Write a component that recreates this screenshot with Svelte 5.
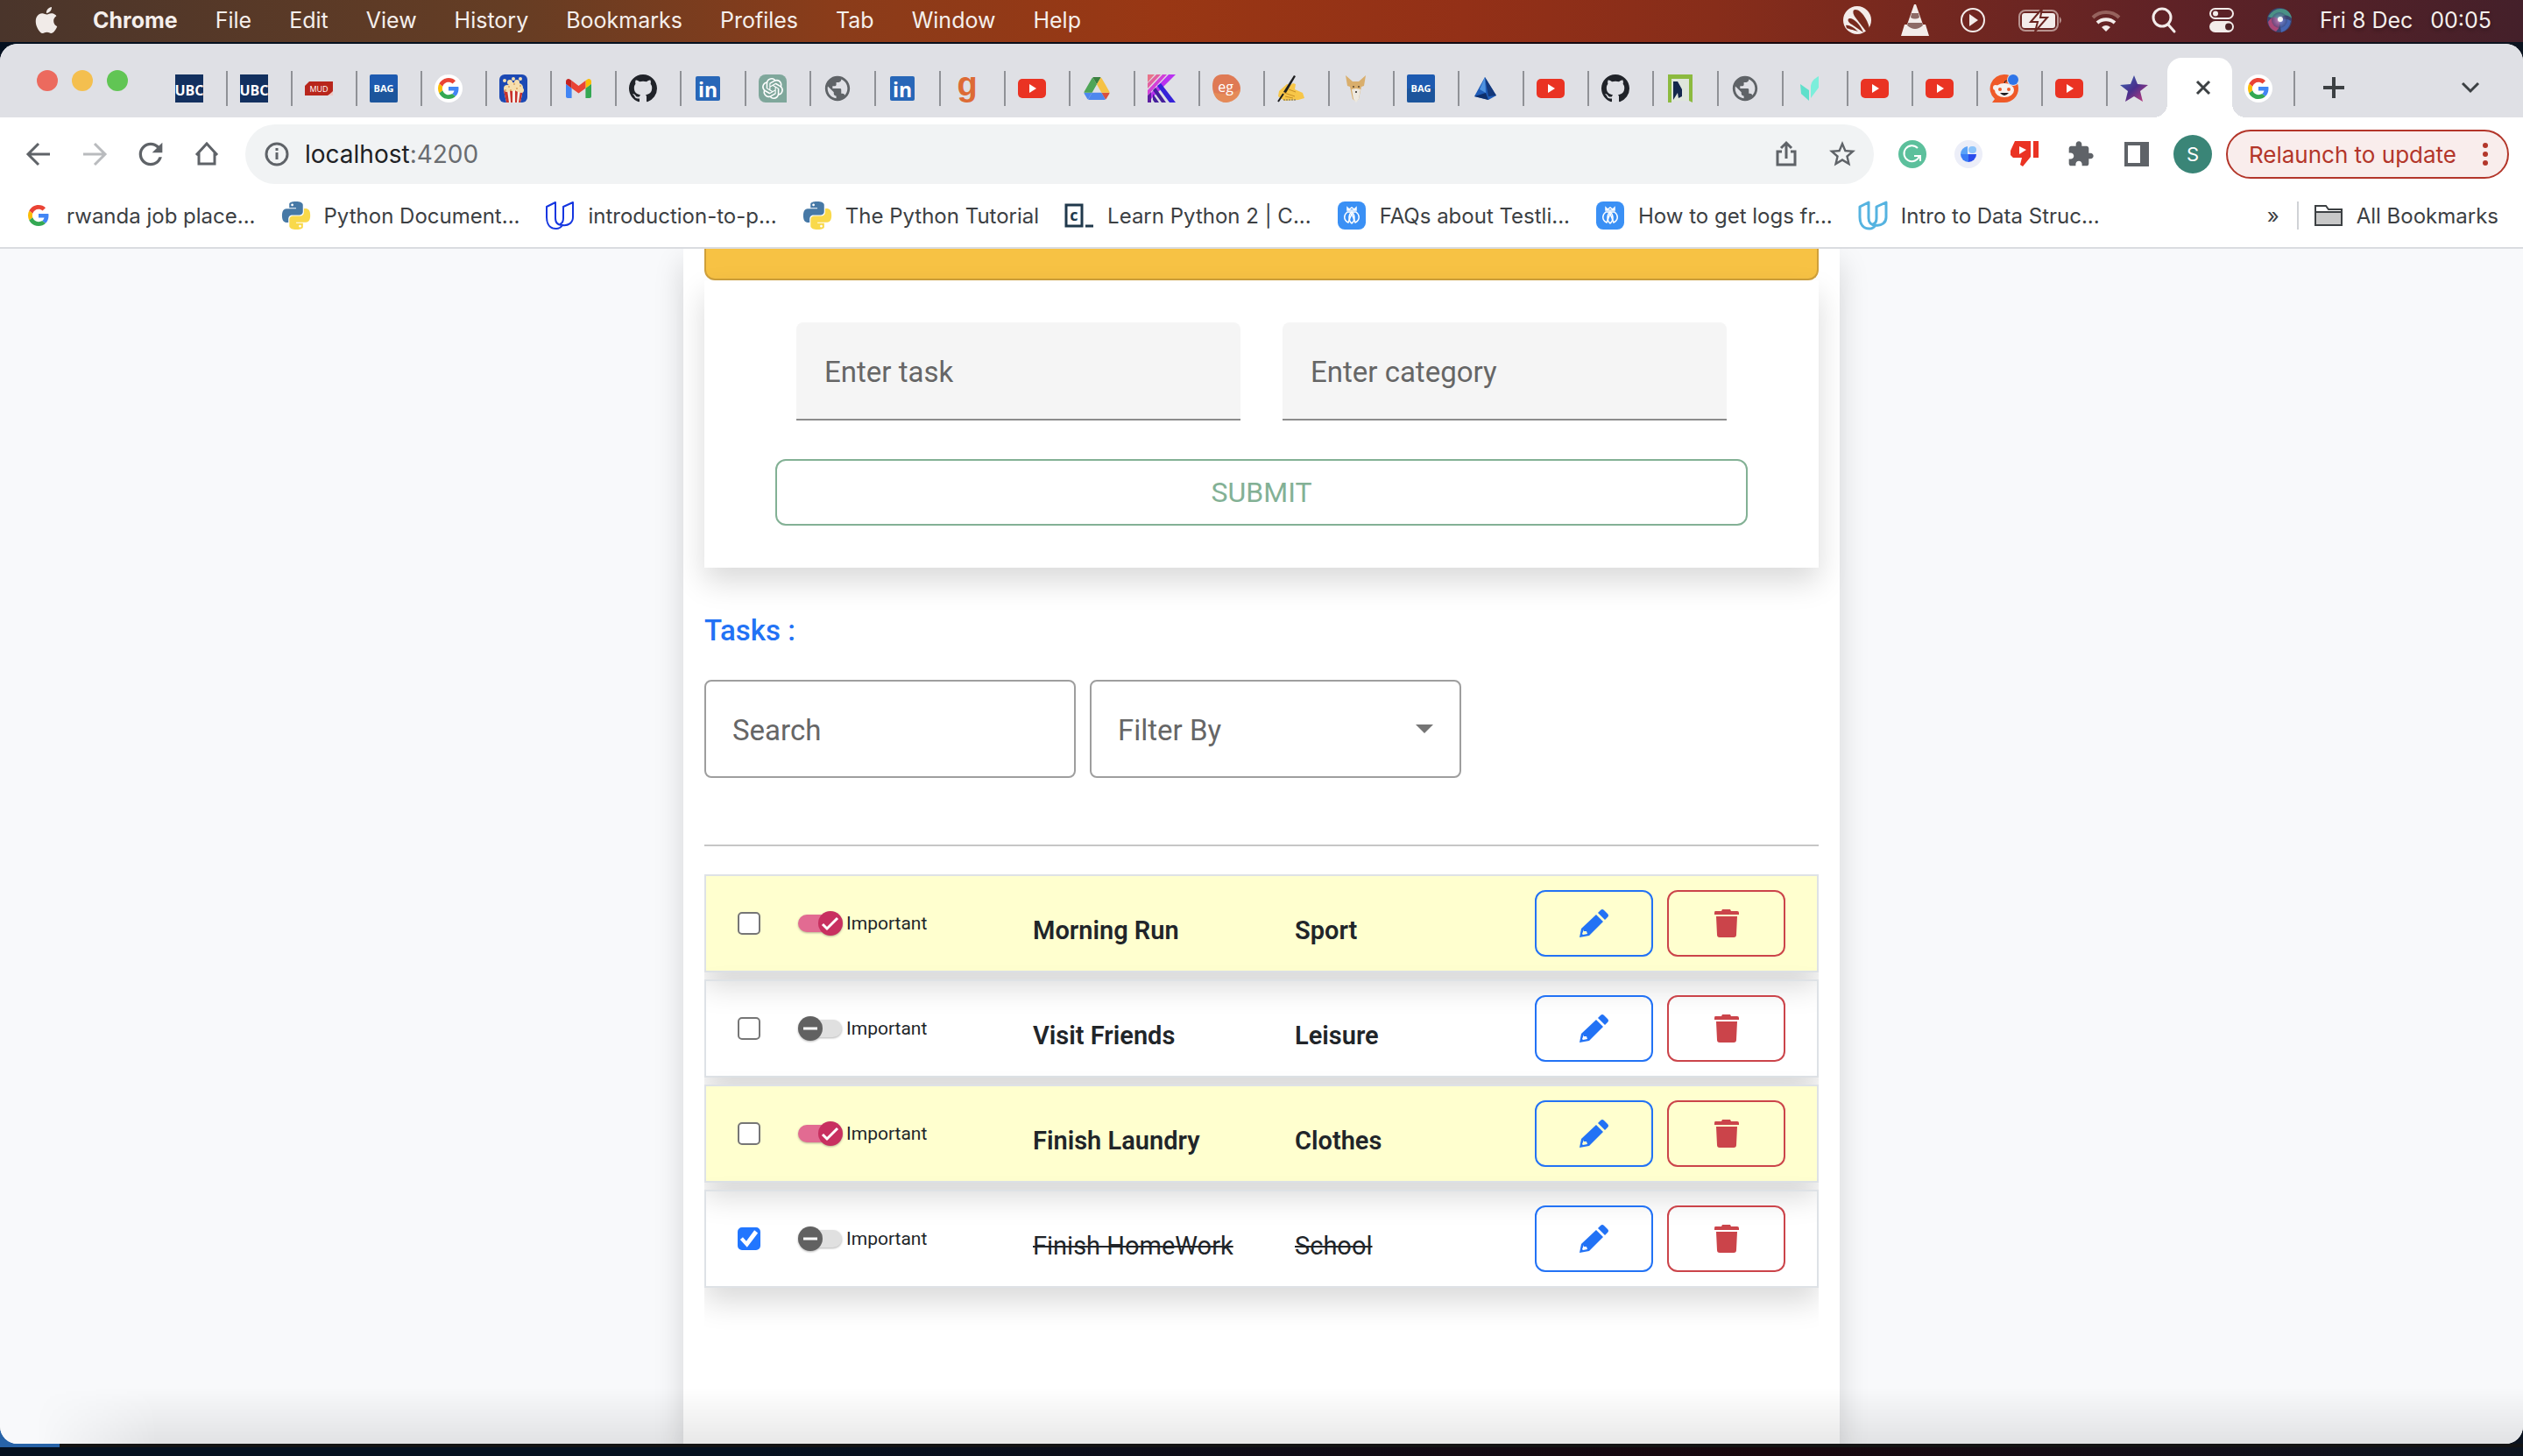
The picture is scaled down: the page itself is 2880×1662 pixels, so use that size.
<script>
  const menus = ['File', 'Edit', 'View', 'History', 'Bookmarks', 'Profiles', 'Tab', 'Window', 'Help'];

  const status = ['swirl', 'cone', 'playing', 'battery', 'wifi', 'search', 'control', 'siri'];

  const tabs = [
    'ubc', 'ubc', 'mud', 'bag', 'googleDisc', 'popcorn', 'gmail', 'github', 'linkedin', 'gpt', 'globe',
    'linkedin', 'goodreads', 'youtube', 'drive', 'kotlin', 'eg', 'writing', 'deer', 'bag', 'prism',
    'youtube', 'github', 'ngx', 'globe', 'leaf', 'youtube', 'youtube', 'reddit', 'youtube', 'star'
  ];

  const bookmarks = [
    ['google', 'rwanda job place...'],
    ['python', 'Python Document...'],
    ['udacity', 'introduction-to-p...'],
    ['python', 'The Python Tutorial'],
    ['codecademy', 'Learn Python 2 | C...'],
    ['testlio', 'FAQs about Testli...'],
    ['testlio', 'How to get logs fr...'],
    ['udacityLight', 'Intro to Data Struc...']
  ];

  let tasks = $state([
    { name: 'Morning Run', category: 'Sport', important: true, done: false },
    { name: 'Visit Friends', category: 'Leisure', important: false, done: false },
    { name: 'Finish Laundry', category: 'Clothes', important: true, done: false },
    { name: 'Finish HomeWork', category: 'School', important: false, done: true }
  ]);

  const githubPath =
    'M8 0C3.58 0 0 3.58 0 8c0 3.54 2.29 6.53 5.47 7.59.4.07.55-.17.55-.38 0-.19-.01-.82-.01-1.49-2.01.37-2.53-.49-2.69-.94-.09-.23-.48-.94-.82-1.13-.28-.15-.68-.52-.01-.53.63-.01 1.08.58 1.23.82.72 1.21 1.87.87 2.33.66.07-.52.28-.87.51-1.07-1.78-.2-3.64-.89-3.64-3.95 0-.87.31-1.59.82-2.15-.08-.2-.36-1.02.08-2.12 0 0 .67-.21 2.2.82.64-.18 1.32-.27 2-.27s1.36.09 2 .27c1.53-1.04 2.2-.82 2.2-.82.44 1.1.16 1.92.08 2.12.51.56.82 1.27.82 2.15 0 3.07-1.87 3.75-3.65 3.95.29.25.54.73.54 1.48 0 1.07-.01 1.93-.01 2.2 0 .21.15.46.55.38A8.01 8.01 0 0 0 16 8c0-4.42-3.58-8-8-8z';

  const googlePaths = [
    ['#ea4335', 'M24 9.5c3.54 0 6.71 1.22 9.21 3.6l6.85-6.85C35.9 2.38 30.47 0 24 0 14.62 0 6.51 5.38 2.56 13.22l7.98 6.19C12.43 13.72 17.74 9.5 24 9.5z'],
    ['#4285f4', 'M46.98 24.55c0-1.57-.15-3.09-.38-4.55H24v9.02h12.94c-.58 2.96-2.26 5.48-4.78 7.18l7.73 6c4.51-4.18 7.09-10.36 7.09-17.65z'],
    ['#fbbc05', 'M10.53 28.59c-.48-1.45-.76-2.99-.76-4.59s.27-3.14.76-4.59l-7.98-6.19C.92 16.46 0 20.12 0 24c0 3.88.92 7.54 2.56 10.78l7.97-6.19z'],
    ['#34a853', 'M24 48c6.48 0 11.93-2.13 15.89-5.81l-7.73-6c-2.15 1.45-4.92 2.3-8.16 2.3-6.26 0-11.57-4.22-13.47-9.91l-7.98 6.19C6.51 42.62 14.62 48 24 48z']
  ];

  const gmailPaths = [
    ['#4285f4', 'M58 108h14V74L52 59v43c0 3.32 2.69 6 6 6'],
    ['#34a853', 'M120 108h14c3.32 0 6-2.69 6-6V59l-20 15'],
    ['#fbbc04', 'M120 48v26l20-15v-8c0-7.42-8.47-11.65-14.4-7.2'],
    ['#ea4335', 'M72 74V48l24 18 24-18v26L96 92'],
    ['#c5221f', 'M52 51v8l20 15V48l-5.6-4.2c-5.94-4.45-14.4-.22-14.4 7.2']
  ];

  const drivePaths = [
    ['#4e87ee', 'm6.6 66.85 3.85 6.65c.8 1.4 1.95 2.5 3.3 3.3l13.75-23.8h-27.5c0 1.55.4 3.1 1.2 4.5z'],
    ['#4fa557', 'm43.65 25-13.75-23.8c-1.35.8-2.5 1.9-3.3 3.3l-25.4 44a9.06 9.06 0 0 0-1.2 4.5h27.5z'],
    ['#d9503f', 'm73.55 76.8c1.35-.8 2.5-1.9 3.3-3.3l1.6-2.75 7.65-13.25c.8-1.4 1.2-2.95 1.2-4.5h-27.5l5.85 11.5z'],
    ['#3b8040', 'm43.65 25 13.75-23.8c-1.35-.8-2.9-1.2-4.5-1.2h-18.5c-1.6 0-3.15.45-4.5 1.2z'],
    ['#4e87ee', 'm59.8 53h-32.3l-13.75 23.8c1.35.8 2.9 1.2 4.5 1.2h50.8c1.6 0 3.15-.45 4.5-1.2z'],
    ['#f6c244', 'm73.4 26.5-12.7-22c-.8-1.4-1.95-2.5-3.3-3.3l-13.75 23.8 16.15 28h27.45c0-1.55-.4-3.1-1.2-4.5z']
  ];

  const pythonPaths = [
    ['#4779a6', 'M14.25.18l.9.2.73.26.59.3.45.32.34.34.25.34.16.33.1.3.04.26.02.2-.01.13V8.5l-.05.63-.13.55-.21.46-.26.38-.3.31-.33.25-.35.19-.35.14-.33.1-.3.07-.26.04-.21.02H8.77l-.69.05-.59.14-.5.22-.41.27-.33.32-.27.35-.2.36-.15.37-.1.35-.07.32-.04.27-.02.21v3.06H3.17l-.21-.03-.28-.07-.32-.12-.35-.18-.36-.26-.36-.36-.35-.46-.32-.59-.28-.73-.21-.88-.14-1.05-.05-1.23.06-1.22.16-1.04.24-.87.32-.71.36-.57.4-.44.42-.33.42-.24.4-.16.36-.1.32-.05.24-.01h.16l.06.01h8.16v-.83H6.18l-.01-2.75-.02-.37.05-.34.11-.31.17-.28.25-.26.31-.23.38-.2.44-.18.51-.15.58-.12.64-.1.71-.06.77-.04.84-.02 1.27.05zm-6.3 1.98l-.23.33-.08.41.08.41.23.34.33.22.41.09.41-.09.33-.22.23-.34.08-.41-.08-.41-.23-.33-.33-.22-.41-.09-.41.09z'],
    ['#f9d94b', 'M21.1 6.11l.28.06.32.12.35.18.36.27.36.35.35.47.32.59.28.73.21.88.14 1.04.05 1.23-.06 1.23-.16 1.04-.24.86-.32.71-.36.57-.4.45-.42.33-.42.24-.4.16-.36.09-.32.05-.24.02-.16-.01h-8.22v.82h5.84l.01 2.76.02.36-.05.34-.11.31-.17.29-.25.25-.31.24-.38.2-.44.17-.51.15-.58.13-.64.09-.71.07-.77.04-.84.01-1.27-.04-1.07-.14-.9-.2-.73-.25-.59-.3-.45-.33-.34-.34-.25-.34-.16-.33-.1-.3-.04-.25-.02-.2.01-.13v-5.34l.05-.64.13-.54.21-.46.26-.38.3-.32.33-.24.35-.2.35-.14.33-.1.3-.06.26-.04.21-.02.13-.01h5.84l.69-.05.59-.14.5-.21.41-.28.33-.32.27-.35.2-.36.15-.36.1-.35.07-.32.04-.28.02-.21V6.07h2.09l.14.01zm-6.47 14.25l-.23.33-.08.41.08.41.23.33.33.23.41.08.41-.08.33-.23.23-.33.08-.41-.08-.41-.23-.33-.33-.23-.41-.08-.41.08z']
  ];

  const gptPath =
    'M22.2819 9.8211a5.9847 5.9847 0 0 0-.5157-4.9108 6.0462 6.0462 0 0 0-6.5098-2.9A6.0651 6.0651 0 0 0 4.9807 4.1818a5.9847 5.9847 0 0 0-3.9977 2.9 6.0462 6.0462 0 0 0 .7427 7.0966 5.98 5.98 0 0 0 .511 4.9107 6.051 6.051 0 0 0 6.5146 2.9001A5.9847 5.9847 0 0 0 13.2599 24a6.0557 6.0557 0 0 0 5.7718-4.2058 5.9894 5.9894 0 0 0 3.9977-2.9001 6.0557 6.0557 0 0 0-.7475-7.0729zm-9.022 12.6081a4.4755 4.4755 0 0 1-2.8764-1.0408l.1419-.0804 4.7783-2.7582a.7948.7948 0 0 0 .3927-.6813v-6.7369l2.02 1.1686a.071.071 0 0 1 .038.052v5.5826a4.504 4.504 0 0 1-4.4945 4.4944zm-9.6607-4.1254a4.4708 4.4708 0 0 1-.5346-3.0137l.142.0852 4.783 2.7582a.7712.7712 0 0 0 .7806 0l5.8428-3.3685v2.3324a.0804.0804 0 0 1-.0332.0615L9.74 19.9502a4.4992 4.4992 0 0 1-6.1408-1.6464zM2.3408 7.8956a4.485 4.485 0 0 1 2.3655-1.9728V11.6a.7664.7664 0 0 0 .3879.6765l5.8144 3.3543-2.0201 1.1685a.0757.0757 0 0 1-.071 0l-4.8303-2.7865A4.504 4.504 0 0 1 2.3408 7.872zm16.5963 3.8558L13.1038 8.364 15.1192 7.2a.0757.0757 0 0 1 .071 0l4.8303 2.7913a4.4944 4.4944 0 0 1-.6765 8.1042v-5.6772a.79.79 0 0 0-.407-.667zm2.0107-3.0231l-.142-.0852-4.7735-2.7818a.7759.7759 0 0 0-.7854 0L9.409 9.2297V6.8974a.0662.0662 0 0 1 .0284-.0615l4.8303-2.7866a4.4992 4.4992 0 0 1 6.6802 4.66zM8.3065 12.863l-2.02-1.1638a.0804.0804 0 0 1-.038-.0567V6.0742a4.4992 4.4992 0 0 1 7.3757-3.4537l-.142.0805L8.704 5.459a.7948.7948 0 0 0-.3927.6813zm1.0976-2.3654l2.602-1.4998 2.6069 1.4998v2.9994l-2.5974 1.4997-2.6067-1.4997Z';

  const globePath =
    'M12 2C6.48 2 2 6.48 2 12s4.48 10 10 10 10-4.48 10-10S17.52 2 12 2zm-1 17.93c-3.95-.49-7-3.85-7-7.93 0-.62.08-1.21.21-1.79L9 15v1c0 1.1.9 2 2 2v1.93zm6.9-2.54c-.26-.81-1-1.39-1.9-1.39h-1v-3c0-.55-.45-1-1-1H8v-2h2c.55 0 1-.45 1-1V7h2c1.1 0 2-.9 2-2v-.41c2.93 1.19 5 4.06 5 7.41 0 2.08-.8 3.97-2.1 5.39z';

  const applePath =
    'M12.152 6.896c-.948 0-2.415-1.078-3.96-1.04-2.04.027-3.91 1.183-4.961 3.014-2.117 3.675-.546 9.103 1.519 12.09 1.013 1.454 2.208 3.09 3.792 3.039 1.52-.065 2.09-.987 3.935-.987 1.831 0 2.35.987 3.96.948 1.637-.026 2.676-1.48 3.676-2.948 1.156-1.688 1.636-3.325 1.662-3.415-.039-.013-3.182-1.221-3.22-4.857-.026-3.04 2.48-4.494 2.597-4.559-1.429-2.09-3.623-2.324-4.39-2.376-2-.156-3.675 1.09-4.61 1.09zM15.53 3.83c.843-1.012 1.4-2.427 1.245-3.83-1.207.052-2.662.805-3.532 1.818-.78.896-1.454 2.338-1.273 3.714 1.338.104 2.715-.688 3.559-1.701';

  const puzzlePath =
    'M20.5 11H19V7c0-1.1-.9-2-2-2h-4V3.5C13 2.12 11.88 1 10.5 1S8 2.12 8 3.5V5H4c-1.1 0-1.99.9-1.99 2v3.8H3.5c1.49 0 2.7 1.21 2.7 2.7s-1.21 2.7-2.7 2.7H2V20c0 1.1.9 2 2 2h3.8v-1.5c0-1.49 1.21-2.7 2.7-2.7 1.49 0 2.7 1.21 2.7 2.7V22H17c1.1 0 2-.9 2-2v-4h1.5c1.38 0 2.5-1.12 2.5-2.5S21.88 11 20.5 11z';

  const starPath =
    'M22 9.24l-7.19-.62L12 2 9.19 8.63 2 9.24l5.46 4.73L5.82 21 12 17.27 18.18 21l-1.63-7.03L22 9.24zM12 15.4l-3.76 2.27 1-4.28-3.32-2.88 4.38-.38L12 6.1l1.71 4.04 4.38.38-3.32 2.88 1 4.28L12 15.4z';

  const reloadPath =
    'M17.65 6.35A7.958 7.958 0 0 0 12 4c-4.42 0-7.99 3.58-7.99 8s3.57 8 7.99 8c3.73 0 6.84-2.55 7.73-6h-2.08A5.99 5.99 0 0 1 12 18c-3.31 0-6-2.69-6-6s2.69-6 6-6c1.66 0 3.14.69 4.22 1.78L13 11h7V4l-2.35 2.35z';

  const udacityPath =
    'M1 6L11 1v18c0 5 3 8 8 8-2 3-5 4-7 4C5 31 1 26 1 18zM16 26c3-1 4-4 4-7V6l11-5v17c0 6-5 10-12 9';
</script>

{#snippet paths(list)}
  {#each list as [fill, d]}<path {fill} {d} />{/each}
{/snippet}

{#snippet site(name)}
  <svg class="site" viewBox="0 0 32 32" aria-hidden="true">
    {#if name === 'ubc'}
      <rect width="32" height="32" fill="#12305f" />
      <text x="16" y="24" class="mark" font-size="16" font-weight="700" fill="#fff">UBC</text>
    {:else if name === 'mud'}
      <path d="M5 8h27v12l-6 4H0V13z" fill="#b8261c" />
      <text x="16" y="20" class="mark" font-size="9" fill="#fff">MUD</text>
      <path d="M27 24l5-5v5z" fill="#f0c9c4" />
    {:else if name === 'bag'}
      <rect width="32" height="32" rx="2" fill="#1d5ab0" />
      <rect y="16" width="32" height="16" rx="2" fill="#1d5290" opacity=".6" />
      <text x="16" y="20" class="mark" font-size="11" font-weight="700" fill="#fff">BAG</text>
    {:else if name === 'googleDisc'}
      <circle cx="16" cy="16" r="16" fill="#fff" />
      <svg x="4" y="4" width="24" height="24" viewBox="0 0 48 48">{@render paths(googlePaths)}</svg>
    {:else if name === 'google'}
      <svg x="4" y="4" width="24" height="24" viewBox="0 0 48 48">{@render paths(googlePaths)}</svg>
    {:else if name === 'popcorn'}
      <rect width="32" height="32" rx="6" fill="#1c49b4" />
      <path d="M5 18h22l-3 14H8z" fill="#f4f0ea" />
      <path d="M5 18h4l2 14H8zM12 18h3v14h-2zM18 18h3l-1 14h-2zM24 18h3l-3 14h-2z" fill="#c8322b" />
      <g fill="#f6dfae">
        <circle cx="9" cy="16" r="4" /><circle cx="15" cy="14" r="5" /><circle cx="22" cy="15" r="5" />
        <circle cx="12" cy="9" r="3" /><circle cx="20" cy="9" r="3" /><circle cx="6" cy="7" r="2" />
        <circle cx="16" cy="5" r="2" /><circle cx="24" cy="5" r="2" /><circle cx="25" cy="18" r="3" />
      </g>
      <g fill="#dca25a">
        <circle cx="11" cy="14" r="1" /><circle cx="17" cy="11" r="1" /><circle cx="20" cy="16" r="1" />
        <circle cx="13" cy="18" r="1" /><circle cx="24" cy="13" r="1" /><circle cx="7" cy="18" r="1" />
      </g>
    {:else if name === 'gmail'}
      <svg x="2" y="5" width="29" height="22" viewBox="52 42 88 66">{@render paths(gmailPaths)}</svg>
    {:else if name === 'github'}
      <svg width="32" height="32" viewBox="0 0 16 16"><path d={githubPath} fill="#202329" /></svg>
    {:else if name === 'linkedin'}
      <rect x="2" y="2" width="28" height="28" rx="2" fill="#2867b8" />
      <text x="16" y="26" class="mark" font-size="23" font-weight="700" fill="#fff">in</text>
    {:else if name === 'gpt'}
      <path d="M8 0h16a8 8 0 0 1 8 8v24H8a8 8 0 0 1-8-8V8a8 8 0 0 1 8-8z" fill="#7fa79b" />
      <svg x="4" y="4" width="24" height="24" viewBox="0 0 24 24"><path d={gptPath} fill="#fff" /></svg>
    {:else if name === 'globe'}
      <svg x="-1" y="-1" width="34" height="34" viewBox="0 0 24 24"><path d={globePath} fill="#5f6367" /></svg>
    {:else if name === 'goodreads'}
      <text x="16" y="24" class="mark sans" font-size="38" font-weight="700" fill="#dd6b35">g</text>
    {:else if name === 'youtube'}
      <rect y="5" width="32" height="22" rx="5" fill="#ea3323" />
      <path d="M13 11v10l8-5z" fill="#fff" />
    {:else if name === 'drive'}
      <svg x="1" y="3" width="30" height="26" viewBox="0 0 87.3 78">{@render paths(drivePaths)}</svg>
    {:else if name === 'kotlin'}
      <path d="M0 0h8L0 9z" fill="#e8738a" />
      <path d="M10 0h5L0 16v-6z" fill="#e2609f" />
      <path d="M17 0h5L0 24v-6z" fill="#d33fd8" />
      <path d="M24 0h8L0 32v-7z" fill="#b932f0" />
      <path d="M0 24l4-4v12H0z" fill="#5d1fa0" />
      <path d="M6 18l3-3 12 17h-5zM6 22l7 10H8l-2-3z" fill="#45209c" />
      <path d="M11 13l4-3 17 22h-7z" fill="#3622d8" />
    {:else if name === 'eg'}
      <path d="M11 0h7c8 2 14 9 14 16s-6 15-16 16C6 32 0 24 0 13 0 5 4 0 11 0z" fill="#df7a55" />
      <path d="M1 20c4 3 24 3 31-4 0 8-6 15-16 16C9 32 3 28 1 20z" fill="#e9955a" opacity=".6" />
      <text x="15" y="20" class="mark" font-size="16" fill="#fff">eg</text>
    {:else if name === 'writing'}
      <path d="M2 19l9-8 4 1 3-2 3 1-1 6 9 4 2 6-7 2-16 1-7-5z" fill="#f7c648" />
      <path d="M8 21l12 4M9 25l9 2M13 17l8 3" stroke="#c98f24" stroke-width="1" />
      <path d="M19 1l2 1-11 19-3-1z" fill="#1d1d1f" />
      <path d="M7 22L1 31" stroke="#1d1d1f" stroke-width="2" />
      <path d="M7 29h14" stroke="#666" stroke-width="1" stroke-dasharray="2 1" />
    {:else if name === 'deer'}
      <path d="M4 1l8 7h7l8-7-2 12-3 1-3 14-3 3-4-3-3-14-3-1z" fill="#d9ae6c" />
      <path d="M11 17l5-1 5 1-2 11-3 4-3-4z" fill="#eee9e0" />
      <circle cx="13" cy="14" r="1" fill="#5b4630" /><circle cx="19" cy="14" r="1" fill="#5b4630" />
      <circle cx="16" cy="20" r="1" fill="#26211c" />
    {:else if name === 'prism'}
      <path d="M15 3l13 21-9 5-16-4z" fill="#1f5cb8" />
      <path d="M15 3l13 21-9 1z" fill="#14387a" />
      <path d="M15 3l-6 14 7 4z" fill="#4f93e0" />
      <path d="M3 25l13-4 3 8z" fill="#0e2f6c" />
    {:else if name === 'ngx'}
      <path d="M2 0h28v32l-4-2V5H6v27H2z" fill="#8cba3f" />
      <path d="M6 5h20v25H6z" fill="#dfe6dc" />
      <path d="M8 8h5l5 9v8l-4 2-1-6-5 8z" fill="#14284c" />
    {:else if name === 'leaf'}
      <path d="M5 11l10 7v12L6 22z" fill="#5fe0cb" />
      <path d="M26 2v13L17 27V13c1-6 4-8 9-11z" fill="#7ceedb" />
    {:else if name === 'reddit'}
      <path d="M16 0a16 16 0 1 1 0 32H2l3-4A16 16 0 0 1 16 0z" fill="#ef5a28" />
      <ellipse cx="16" cy="18" rx="11" ry="8" fill="#f6f1ee" />
      <circle cx="6" cy="15" r="3" fill="#f6f1ee" />
      <circle cx="11" cy="17" r="2" fill="#ef5a28" /><circle cx="21" cy="17" r="2" fill="#ef5a28" />
      <path d="M11 21h10q-5 6-10 0z" fill="#1d1d1f" />
      <path d="M16 10q0-3 3-3" fill="none" stroke="#1d1d1f" stroke-width="1" />
      <circle cx="26" cy="6" r="7" fill="#dfe0e5" />
      <circle cx="26" cy="6" r="6" fill="#2f75e8" />
    {:else if name === 'star'}
      <linearGradient id="starFill" x1="0" y1="0" x2="1" y2="1">
        <stop offset="0" stop-color="#3b6db8" /><stop offset=".5" stop-color="#4a2f8c" />
        <stop offset="1" stop-color="#d23f7c" />
      </linearGradient>
      <path d="M16 1l4 10 12 1-9 7 3 12-10-6-10 6 3-12-9-7 12-1z" fill="url(#starFill)" />
    {:else if name === 'python'}
      <svg width="32" height="32" viewBox="0 0 24 24">{@render paths(pythonPaths)}</svg>
    {:else if name === 'udacity'}
      <path d={udacityPath} fill="none" stroke="#1536e0" stroke-width="2" stroke-linejoin="round" />
    {:else if name === 'udacityLight'}
      <path d={udacityPath} fill="none" stroke="#55b3e0" stroke-width="3" stroke-linejoin="round" />
    {:else if name === 'codecademy'}
      <rect x="1" y="4" width="18" height="24" fill="none" stroke="#20394c" stroke-width="3" />
      <text x="10" y="22" class="mark" font-size="18" font-weight="700" fill="#20394c">c</text>
      <path d="M23 28h9" stroke="#20394c" stroke-width="3" />
    {:else if name === 'testlio'}
      <rect width="32" height="32" rx="8" fill="#3a90f5" />
      <g fill="none" stroke="#fff" stroke-width="1.5">
        <path d="M11 10V7l2 2 3-2 3 2 2-2v3zM11 12c-4 3-5 9 1 12l4-10 4 10c6-3 5-9 1-12z" />
        <path d="M16 12c-4 3-4 10 0 13 4-3 4-10 0-13z" />
      </g>
    {/if}
  </svg>
{/snippet}

{#snippet tool(name)}
  <svg class="tool" viewBox="0 0 32 32" fill="none" stroke="currentColor" stroke-width="3" aria-hidden="true">
    {#if name === 'back'}
      <path d="M29 16H5M16 4L4 16l12 12" />
    {:else if name === 'forward'}
      <path d="M3 16h24M16 4l12 12-12 12" />
    {:else if name === 'reload'}
      <svg x="-4" y="-4" width="40" height="40" viewBox="0 0 24 24"><path d={reloadPath} fill="currentColor" stroke="none" /></svg>
    {:else if name === 'home'}
      <path d="M4 17L16 4l12 13M7 14v13h18V14" stroke-linejoin="miter" />
    {:else if name === 'info'}
      <circle cx="16" cy="16" r="12" stroke-width="3" />
      <path d="M16 14v8M16 9v3" stroke-width="3" />
    {:else if name === 'share'}
      <path d="M11 13H6v15h20V13h-5M16 21V4M10 9l6-6 6 6" stroke-width="3" />
    {:else if name === 'favourite'}
      <svg x="-2" y="-2" width="36" height="36" viewBox="0 0 24 24"><path d={starPath} fill="currentColor" stroke="none" /></svg>
    {:else if name === 'grammarly'}
      <circle cx="16" cy="16" r="16" fill="#5cc09c" stroke="none" />
      <path d="M22 9a9 9 0 1 0 2 9h-6M25 17v7" stroke="#fff" stroke-width="2" />
    {:else if name === 'pie'}
      <circle cx="16" cy="16" r="16" fill="#eceef8" stroke="none" />
      <path d="M15 7a9 9 0 0 0-8 9h8z" fill="#5aa2f8" stroke="none" />
      <path d="M7 16a9 9 0 0 0 9 9v-9z" fill="#3b7df6" stroke="none" />
      <path d="M16 25a9 9 0 0 0 9-9h-9z" fill="#2a4cec" stroke="none" />
      <rect x="16" y="7" width="9" height="8" rx="4" fill="#8cc4fa" stroke="none" />
    {:else if name === 'dislike'}
      <path d="M5 1h18v18l-9 11-3-2 2-8H3l-3-3v-5z" fill="#ea3323" stroke="none" />
      <rect x="26" y="1" width="6" height="19" fill="#ea3323" stroke="none" />
      <path d="M10 7v9l8-5z" fill="#fff" stroke="none" />
    {:else if name === 'extensions'}
      <svg x="0" y="0" width="32" height="32" viewBox="0 0 24 24"><path d={puzzlePath} fill="currentColor" stroke="none" /></svg>
    {:else if name === 'panel'}
      <path d="M2 2h28v28H2zM6 6v20h14V6z" fill="currentColor" fill-rule="evenodd" stroke="none" />
    {:else if name === 'close'}
      <path d="M9 9l14 14M23 9L9 23" />
    {:else if name === 'plus'}
      <path d="M16 4v24M4 16h24" stroke-width="4" />
    {:else if name === 'down'}
      <path d="M7 11l9 9 9-9" />
    {:else if name === 'folder'}
      <path d="M1 5h12l3 4h15v18H1z" fill="#fff" stroke-width="2" />
      <path d="M2 13h28v13H2z" fill="#c8c8c8" stroke="none" />
      <path d="M1 12h30" stroke-width="2" />
    {/if}
  </svg>
{/snippet}

{#snippet indicator(name)}
  {#if name === 'battery'}
    <svg class="indicator wide" viewBox="0 0 56 36" fill="#f3ecea" aria-hidden="true">
      <rect x="5" y="7" width="44" height="23" rx="7" fill="none" stroke="#b89490" stroke-width="2" />
      <path d="M51 14q4 4 0 8z" fill="#b89490" />
      <rect x="8" y="10" width="38" height="17" rx="3" />
      <path d="M31 5L18 20h8l-3 11 14-16h-8z" stroke="#6a2521" stroke-width="2" />
    </svg>
  {:else}
    <svg class="indicator" viewBox="0 0 36 36" fill="#f3ecea" aria-hidden="true">
      {#if name === 'swirl'}
        <circle cx="18" cy="18" r="16" />
        <g fill="#782a1e">
          <path d="M16 6c-4 0-3 5 0 9l13 17 3-4c-1-8-9-22-16-22z" />
          <path d="M9 16c-3 1-1 5 3 7l13 9C22 23 13 15 9 16z" />
          <path d="M5 24c3-1 9 2 14 7-6-2-11-3-13-4z" />
        </g>
      {:else if name === 'cone'}
        <path d="M17 0h2l8 23h3l4 13H2l4-13h3z" />
        <path d="M14 10h8l1 5q-5 3-10 0zM10 21h16l1 3q-9 8-18 0z" fill="#8d6a66" />
      {:else if name === 'playing'}
        <circle cx="18" cy="18" r="13" fill="none" stroke="#f3ecea" stroke-width="2" />
        <path d="M14 11v14l10-7z" />
      {:else if name === 'wifi'}
        <path d="M3 15a22 22 0 0 1 30 0" fill="none" stroke="#96625d" stroke-width="4" />
        <path d="M8 21a15 15 0 0 1 20 0" fill="none" stroke="#f3ecea" stroke-width="4" />
        <path d="M18 31l-5-5q5-4 10 0z" />
      {:else if name === 'search'}
        <circle cx="16" cy="15" r="10" fill="none" stroke="#f3ecea" stroke-width="3" />
        <path d="M23 23l7 8" stroke="#f3ecea" stroke-width="3" stroke-linecap="round" />
      {:else if name === 'control'}
        <rect x="5" y="5" width="26" height="11" rx="5.5" fill="none" stroke="#f3ecea" stroke-width="2" />
        <circle cx="11" cy="10.5" r="3" />
        <rect x="4" y="19" width="28" height="13" rx="6.5" />
        <circle cx="26" cy="25.5" r="4" fill="#4c2024" />
      {:else if name === 'siri'}
        <radialGradient id="orb"><stop offset="0" stop-color="#fff" /><stop offset=".4" stop-color="#8c86c9" /><stop offset="1" stop-color="#31406f" /></radialGradient>
        <circle cx="18" cy="18" r="14" fill="#3a4470" />
        <path d="M5 14q8-12 20-8 6 3 7 10-8-8-14 2z" fill="#4fa58c" opacity=".8" />
        <path d="M5 20q6-10 13-2 2 8-4 13-8-3-9-11z" fill="#c8487a" opacity=".8" />
        <path d="M18 18q8-3 13 1-2 10-11 13z" fill="#4a6fc4" opacity=".8" />
        <circle cx="18" cy="18" r="9" fill="url(#orb)" opacity=".5" />
        <circle cx="19" cy="17" r="3" fill="#fff" opacity=".9" />
      {/if}
    </svg>
  {/if}
{/snippet}

<div class="screen">
  <nav class="menubar" aria-label="Menu bar">
    <svg class="apple" viewBox="0 0 24 24" aria-hidden="true"><path d={applePath} fill="#f1ebe8" /></svg>
    <div class="menus">
      <button class="app">Chrome</button>
      {#each menus as item}<button>{item}</button>{/each}
    </div>
    <div class="indicators">
      {#each status as name}{@render indicator(name)}{/each}
    </div>
    <time class="clock"><span>Fri 8 Dec</span><span>00:05</span></time>
  </nav>

  <div class="window">
    <div class="tabstrip">
      <div class="lights"><i class="red"></i><i class="amber"></i><i class="green"></i></div>
      {#each tabs as name}
        <button class="tab" aria-label={name}>{@render site(name)}</button>
      {/each}
      <button class="tab active" aria-label="Close tab">{@render tool('close')}</button>
      <button class="tab last" aria-label="google">{@render site('googleDisc')}</button>
      <button class="new" aria-label="New tab">{@render tool('plus')}</button>
      <button class="list" aria-label="Search tabs">{@render tool('down')}</button>
    </div>

    <div class="toolbar">
      <button aria-label="Back">{@render tool('back')}</button>
      <button class="off" aria-label="Forward">{@render tool('forward')}</button>
      <button aria-label="Reload">{@render tool('reload')}</button>
      <button aria-label="Home">{@render tool('home')}</button>
      <div class="omnibox">
        {@render tool('info')}
        <span class="address">localhost<span class="port">:4200</span></span>
        <button aria-label="Share">{@render tool('share')}</button>
        <button aria-label="Bookmark this page">{@render tool('favourite')}</button>
      </div>
      <div class="extensions">
        {#each ['grammarly', 'pie', 'dislike', 'extensions', 'panel'] as name}
          <button aria-label={name}>{@render tool(name)}</button>
        {/each}
      </div>
      <button class="avatar">S</button>
      <button class="relaunch">Relaunch to update <span class="dots"><i></i><i></i><i></i></span></button>
    </div>

    <div class="bookmarks">
      {#each bookmarks as [icon, label]}
        <a href="#{icon}">{@render site(icon)}<span>{label}</span></a>
      {/each}
      <button class="more" aria-label="More bookmarks">»</button>
      <button class="all">{@render tool('folder')}All Bookmarks</button>
    </div>

    <div class="page">
      <main class="container">
        <div class="banner"></div>
        <form class="card" onsubmit={(e) => e.preventDefault()}>
          <div class="fields">
            <input class="filled" type="text" placeholder="Enter task" aria-label="Enter task" />
            <input class="filled" type="text" placeholder="Enter category" aria-label="Enter category" />
          </div>
          <button class="submit" disabled>SUBMIT</button>
        </form>

        <h1>Tasks :</h1>
        <div class="filters">
          <input class="outlined" type="text" placeholder="Search" aria-label="Search" />
          <div class="picker">
            <select class="outlined" aria-label="Filter By"><option>Filter By</option></select>
            <svg class="caret" viewBox="0 0 20 10" aria-hidden="true"><path d="M0 0h20L10 10z" fill="#757575" /></svg>
          </div>
        </div>
        <hr />

        <ul class="tasks">
          {#each tasks as task}
            <li class:important={task.important} class:done={task.done}>
              <input class="check" type="checkbox" bind:checked={task.done} aria-label={'Complete ' + task.name} />
              <label class="toggle">
                <input type="checkbox" role="switch" bind:checked={task.important} />
                <svg viewBox="0 0 52 32" aria-hidden="true">
                  {#if task.important}
                    <rect x="1" y="6" width="50" height="20" rx="10" fill="#e26b92" />
                    <circle cx="38" cy="16" r="14" fill="#c83060" />
                    <path d="M29 17l5 5 12-12" fill="none" stroke="#fff" stroke-width="3" />
                  {:else}
                    <rect x="1" y="6" width="50" height="20" rx="10" fill="#e0e0e0" />
                    <circle cx="15" cy="16" r="14" fill="#616161" />
                    <path d="M7 16h16" stroke="#fff" stroke-width="3" />
                  {/if}
                </svg>
                <span>Important</span>
              </label>
              <span class="text">{task.name}</span>
              <span class="text">{task.category}</span>
              <div class="actions">
                <button class="edit" aria-label="Edit">
                  <svg viewBox="0 0 34 32" aria-hidden="true">
                    <path fill="currentColor" fill-rule="evenodd" d="M19 6l8 8-16 16L0 32l2-10zM5 23l-2 5 1 1 5-1-1-3H5z" />
                    <path fill="currentColor" d="M21 4l3-3q2-2 4 0l4 4q2 2 0 4l-3 3z" />
                  </svg>
                </button>
                <button class="delete" aria-label="Delete">
                  <svg viewBox="0 0 34 32" aria-hidden="true">
                    <path fill="currentColor" d="M4 2h7l1-2h9l1 2h7q2 0 2 2v2H3V4q0-2 1-2zM5 8h24l-1 21q0 3-3 3H9q-3 0-3-3z" />
                  </svg>
                </button>
              </div>
            </li>
          {/each}
        </ul>
      </main>
    </div>
  </div>
</div>

<style>
  :global(body) {
    background: #0b0608;
  }

  .screen {
    display: flex;
    flex-direction: column;
    min-height: 100vh;
    padding-bottom: 14px;
    box-sizing: border-box;
    font-family: Inter, 'Liberation Sans', sans-serif;
    background:
      linear-gradient(#2763a8, #2763a8) 0 calc(100% - 10px) / 68px 20px no-repeat,
      linear-gradient(#141414, #141414) 0 calc(100% - 10px) / 100% 4px no-repeat,
      linear-gradient(90deg, #04101f, #04101f 30%, #17060c 70%, #0c1420);
  }

  button {
    display: flex;
    align-items: center;
    justify-content: center;
    padding: 0;
    border: 0;
    background: none;
    color: inherit;
    font: inherit;
    white-space: nowrap;
  }

  svg {
    display: block;
    flex: none;
    overflow: visible;
  }

  .mark {
    font-family: 'Open Sans', sans-serif;
    text-anchor: middle;
  }

  .sans {
    font-family: 'Liberation Sans', sans-serif;
  }

  /* Menu bar */
  .menubar {
    display: flex;
    align-items: center;
    box-sizing: border-box;
    height: 48px;
    margin-bottom: 2px;
    padding: 0 36px 2px 38px;
    color: #f5efec;
    font-size: 25px;
    text-shadow: 0 2px 4px rgb(0 0 0 / 0.35);
    background: linear-gradient(90deg, #4a352b, #653d24 20%, #8a3c1a 33%, #993714 46%, #933017 58%, #872d1a 68%, #5f2226 86%, #44202a);
  }

  .apple {
    width: 30px;
    height: 32px;
    margin-right: 38px;
  }

  .menus {
    display: flex;
    flex: 1;
    gap: 43px;
  }

  .app {
    font-weight: 700;
  }

  .indicators {
    display: flex;
    gap: 30px;
    margin-right: 28px;
  }

  .indicator {
    width: 36px;
    height: 36px;
  }

  .indicator.wide {
    width: 56px;
  }

  .clock {
    display: flex;
    gap: 20px;
  }

  /* Browser window */
  .window {
    display: flex;
    flex: 1;
    flex-direction: column;
    overflow: hidden;
    border-radius: 20px;
    background: #fff;
    color: #5f6368;
  }

  .tabstrip {
    display: flex;
    align-items: center;
    height: 84px;
    padding-right: 44px;
    background: #dfe0e5;
  }

  .lights {
    display: flex;
    flex: none;
    gap: 16px;
    width: 144px;
    padding-left: 42px;
  }

  .lights i {
    width: 24px;
    height: 24px;
    border-radius: 50%;
  }

  .red {
    background: #ec6a5e;
  }

  .amber {
    background: #f4bf4f;
  }

  .green {
    background: #61c554;
  }

  .tab {
    position: relative;
    justify-content: flex-start;
    flex: 0 0 74px;
    box-sizing: border-box;
    height: 40px;
    margin-top: 18px;
    padding-left: 14px;
    border-right: 2px solid #8f9196;
  }

  .tab:has(+ .active) {
    flex-basis: 68px;
    border-right: 0;
  }

  .tab.last {
    flex-basis: 72px;
  }

  .tab.active {
    justify-content: center;
    align-self: flex-end;
    height: 68px;
    margin: 0;
    padding: 0 0 0 8px;
    border: 0;
    border-radius: 16px 16px 0 0;
    background: #fff;
    color: #3c4043;
  }

  /* Flared feet of the selected tab */
  .tab.active::before,
  .tab.active::after {
    position: absolute;
    bottom: 0;
    width: 16px;
    height: 16px;
    content: '';
  }

  .tab.active::before {
    right: 100%;
    background: radial-gradient(circle at 0 0, transparent 16px, #fff 16px);
  }

  .tab.active::after {
    left: 100%;
    background: radial-gradient(circle at 100% 0, transparent 16px, #fff 16px);
  }

  .new,
  .list {
    margin-top: 16px;
    color: #3c4043;
  }

  .new {
    margin-left: 28px;
  }

  .list {
    margin-left: auto;
  }

  .site,
  .tool {
    width: 32px;
    height: 32px;
  }

  .toolbar {
    display: flex;
    align-items: center;
    gap: 32px;
    height: 84px;
    padding: 0 16px 0 28px;
  }

  .off {
    color: #b9bbbe;
  }

  .omnibox {
    display: flex;
    flex: 1;
    align-items: center;
    gap: 32px;
    height: 68px;
    margin-left: -4px;
    padding: 0 20px;
    border-radius: 34px;
    background: #f1f3f4;
  }

  .address {
    flex: 1;
    margin-left: -16px;
    color: #202124;
    font-size: 28px;
  }

  .port {
    color: #696c70;
  }

  .extensions {
    display: flex;
    gap: 32px;
    margin-left: -4px;
  }

  .avatar {
    width: 44px;
    height: 44px;
    margin: 0 -16px 0 -6px;
    border-radius: 50%;
    background: #3a8577;
    color: #fff;
    font-size: 22px;
  }

  .relaunch {
    gap: 30px;
    height: 56px;
    padding: 0 22px 0 24px;
    border: 2px solid #b3362a;
    border-radius: 28px;
    background: #f9edec;
    color: #b3362a;
    font-size: 26px;
  }

  .dots {
    display: flex;
    flex-direction: column;
    gap: 4px;
  }

  .dots i {
    width: 6px;
    height: 6px;
    border-radius: 50%;
    background: currentColor;
  }

  .bookmarks {
    display: flex;
    align-items: center;
    gap: 30px;
    box-sizing: border-box;
    height: 66px;
    padding: 0 28px 8px;
    border-bottom: 2px solid #dadce0;
    color: #3c4043;
    font-size: 24px;
  }

  .bookmarks a {
    display: flex;
    align-items: center;
    gap: 16px;
    color: inherit;
    text-decoration: none;
    white-space: nowrap;
  }

  .more {
    margin-left: auto;
  }

  .all {
    gap: 16px;
    height: 32px;
    margin-left: -10px;
    padding-left: 18px;
    border-left: 2px solid #d0d2d6;
  }

  /* Task page */
  .page {
    position: relative;
    display: flex;
    flex: 1;
    justify-content: center;
    overflow: hidden;
    background: #f8f9fb;
    color: #212529;
    font-family: Roboto, sans-serif;
  }

  /* Shade cast along the lower edge of the window */
  .page::after {
    position: absolute;
    right: 0;
    bottom: 0;
    left: 0;
    height: 64px;
    background: linear-gradient(rgb(0 0 0 / 0), rgb(0 0 0 / 0.09));
    mask-image: linear-gradient(90deg, transparent 40px, #000 180px);
    pointer-events: none;
    content: '';
  }

  .container {
    flex: 0 1 1320px;
    box-sizing: border-box;
    padding: 0 24px;
    background: #fff;
    box-shadow: 0 16px 32px rgb(0 0 0 / 0.15);
  }

  .banner {
    box-sizing: border-box;
    height: 36px;
    border: 2px solid #cfa03a;
    border-top: 0;
    border-radius: 0 0 12px 12px;
    background: #f7c244;
  }

  .card {
    padding: 48px 81px;
    background: #fff;
    box-shadow: 0 16px 32px rgb(0 0 0 / 0.15);
  }

  .fields {
    display: grid;
    grid-template-columns: 1fr 1fr;
    gap: 48px;
    padding: 0 24px;
  }

  input,
  select {
    box-sizing: border-box;
    margin: 0;
    font: inherit;
  }

  .filled,
  .outlined {
    width: 100%;
    height: 112px;
    color: #666;
    font-size: 33px;
  }

  .filled {
    padding: 2px 32px 0;
    border: 0;
    border-bottom: 2px solid #8c8c8c;
    border-radius: 8px 8px 0 0;
    background: #f5f5f5;
  }

  .outlined {
    padding: 2px 30px 0;
    appearance: none;
    border: 2px solid #9e9e9e;
    border-radius: 8px;
    background: transparent;
  }

  ::placeholder {
    color: #666;
    opacity: 1;
  }

  .submit {
    box-sizing: border-box;
    width: 100%;
    height: 76px;
    margin-top: 44px;
    border: 2px solid #83b195;
    border-radius: 12px;
    color: #83b195;
    font-size: 32px;
  }

  h1 {
    margin: 52px 0 36px;
    color: #2272f5;
    font-size: 33px;
    font-weight: 500;
    line-height: 40px;
  }

  .filters {
    display: grid;
    grid-template-columns: repeat(3, 1fr);
    gap: 16px;
    margin-right: -32px;
  }

  .picker {
    display: grid;
    align-items: center;
  }

  .picker > * {
    grid-area: 1 / 1;
  }

  .caret {
    justify-self: end;
    width: 20px;
    height: 10px;
    margin-right: 32px;
    pointer-events: none;
  }

  hr {
    height: 2px;
    margin: 76px 0 32px;
    border: 0;
    background: #c6c6c6;
  }

  .tasks {
    display: flex;
    flex-direction: column;
    gap: 8px;
    margin: 0;
    padding: 0 0 64px;
    overflow: hidden;
    list-style: none;
  }

  li {
    display: grid;
    grid-template-columns: 68px 269fr 299fr 274fr auto;
    align-items: center;
    box-sizing: border-box;
    height: 112px;
    padding: 0 36px;
    border: 2px solid #dee2e6;
    box-shadow: 0 16px 32px rgb(0 0 0 / 0.15);
  }

  .important {
    background: #ffffcf;
  }

  .check {
    display: grid;
    width: 26px;
    height: 26px;
    appearance: none;
    border: 2px solid #767676;
    border-radius: 5px;
    background: #fff;
  }

  .check:checked {
    border-color: #2176ff;
    background: #2176ff;
  }

  .check:checked::after {
    background: #fff;
    clip-path: polygon(4% 54%, 18% 42%, 36% 62%, 78% 6%, 96% 20%, 40% 94%);
    content: '';
  }

  .toggle {
    display: flex;
    align-items: center;
    gap: 4px;
    font-size: 21px;
  }

  .toggle input {
    width: 0;
    height: 0;
    appearance: none;
  }

  .toggle svg {
    width: 52px;
    height: 32px;
    margin-left: -4px;
    filter: drop-shadow(0 1px 1px rgb(0 0 0 / 0.3));
  }

  .text {
    padding-top: 16px;
    font-size: 29px;
    font-weight: 600;
    line-height: 32px;
  }

  .done .text {
    font-weight: 400;
    text-decoration: line-through;
  }

  .actions {
    display: flex;
    gap: 16px;
  }

  .actions button {
    box-sizing: border-box;
    width: 135px;
    height: 76px;
    border: 2px solid currentColor;
    border-radius: 12px;
  }

  .actions svg {
    width: 34px;
    height: 32px;
  }

  .edit {
    color: #2272f5;
  }

  .delete {
    color: #cb444a;
  }
</style>
